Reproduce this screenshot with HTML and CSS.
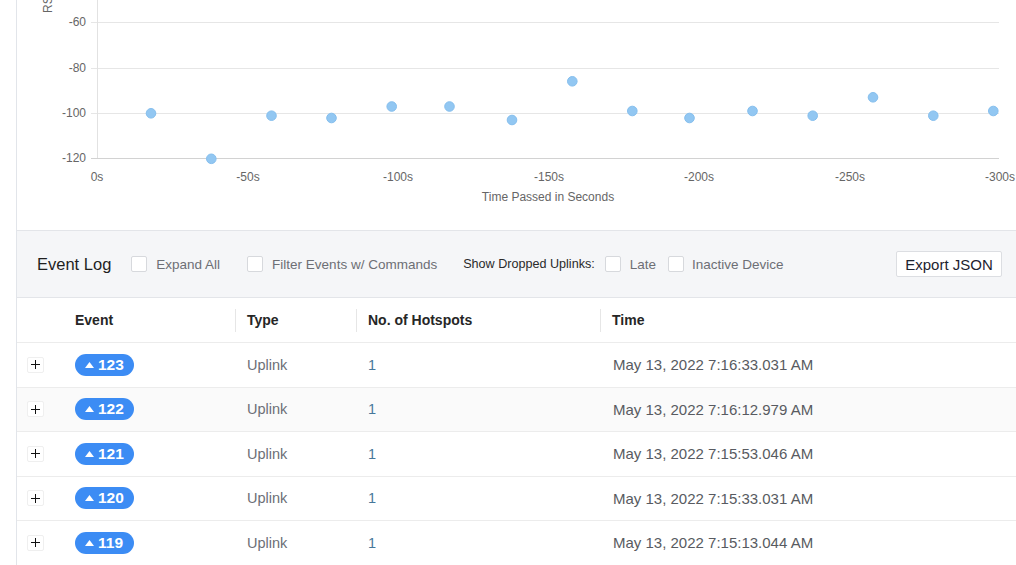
FILE: index.html
```html
<!DOCTYPE html>
<html lang="en">
<head>
<meta charset="utf-8">
<title>Event Log</title>
<link rel="stylesheet" href="styles.css">
</head>
<body>
<div class="panel">
  <section class="chart">
    <svg class="chart-svg" width="999" height="230" viewBox="0 0 999 230">
      <g transform="translate(-17 0)">
        <text class="axis-title" transform="translate(52 13) rotate(-90)">RSSI</text>
        <g class="grid">
          <line x1="91" y1="22.5" x2="999" y2="22.5"/>
          <line x1="91" y1="68.5" x2="999" y2="68.5"/>
          <line x1="91" y1="113.5" x2="999" y2="113.5"/>
        </g>
        <line class="axis" x1="91" y1="158.5" x2="999" y2="158.5"/>
        <line class="axis-v" x1="97.5" y1="0" x2="97.5" y2="158"/>
        <g class="ylab">
          <text x="86" y="26">-60</text>
          <text x="86" y="72">-80</text>
          <text x="86" y="117">-100</text>
          <text x="86" y="162">-120</text>
        </g>
        <g class="xlab">
          <text x="97" y="181">0s</text>
          <text x="248" y="181">-50s</text>
          <text x="398" y="181">-100s</text>
          <text x="549" y="181">-150s</text>
          <text x="699" y="181">-200s</text>
          <text x="850" y="181">-250s</text>
          <text x="1000" y="181">-300s</text>
        </g>
        <text class="x-title" x="548" y="201">Time Passed in Seconds</text>
        <g class="pts">
          <circle cx="151" cy="113.3" r="4.8"/>
          <circle cx="211.3" cy="158.8" r="4.8"/>
          <circle cx="271.5" cy="115.7" r="4.8"/>
          <circle cx="331.5" cy="118" r="4.8"/>
          <circle cx="391.7" cy="106.5" r="4.8"/>
          <circle cx="449.5" cy="106.5" r="4.8"/>
          <circle cx="512" cy="120" r="4.8"/>
          <circle cx="572.3" cy="81.3" r="4.8"/>
          <circle cx="632.3" cy="111" r="4.8"/>
          <circle cx="689.5" cy="118" r="4.8"/>
          <circle cx="752.5" cy="111" r="4.8"/>
          <circle cx="812.7" cy="115.7" r="4.8"/>
          <circle cx="873" cy="97.3" r="4.8"/>
          <circle cx="933.3" cy="115.7" r="4.8"/>
          <circle cx="993.3" cy="111" r="4.8"/>
        </g>
      </g>
    </svg>
  </section>

  <section class="log-bar">
    <h2 class="log-title">Event Log</h2>
    <label class="check g1"><span class="box"></span><span class="check-text">Expand All</span></label>
    <label class="check g2"><span class="box"></span><span class="check-text">Filter Events w/ Commands</span></label>
    <span class="dropped">Show Dropped Uplinks:</span>
    <label class="check g3"><span class="box"></span><span class="check-text">Late</span></label>
    <label class="check g4"><span class="box"></span><span class="check-text">Inactive Device</span></label>
    <button class="export">Export JSON</button>
  </section>

  <div class="table">
    <div class="row head">
      <div class="cell"></div>
      <div class="cell">Event</div>
      <div class="cell sep">Type</div>
      <div class="cell sep">No. of Hotspots</div>
      <div class="cell sep">Time</div>
    </div>
    <div class="row">
      <div class="cell"><span class="plus"><svg width="9" height="9" viewBox="0 0 9 9"><path d="M4.5 0 V9 M0 4.5 H9"/></svg></span></div>
      <div class="cell"><span class="badge"><svg class="tri" width="9" height="6" viewBox="0 0 9 6"><path d="M0 6 L4.5 0 L9 6 Z"/></svg>123</span></div>
      <div class="cell type">Uplink</div>
      <div class="cell count">1</div>
      <div class="cell time">May 13, 2022 7:16:33.031 AM</div>
    </div>
    <div class="row alt">
      <div class="cell"><span class="plus"><svg width="9" height="9" viewBox="0 0 9 9"><path d="M4.5 0 V9 M0 4.5 H9"/></svg></span></div>
      <div class="cell"><span class="badge"><svg class="tri" width="9" height="6" viewBox="0 0 9 6"><path d="M0 6 L4.5 0 L9 6 Z"/></svg>122</span></div>
      <div class="cell type">Uplink</div>
      <div class="cell count">1</div>
      <div class="cell time">May 13, 2022 7:16:12.979 AM</div>
    </div>
    <div class="row">
      <div class="cell"><span class="plus"><svg width="9" height="9" viewBox="0 0 9 9"><path d="M4.5 0 V9 M0 4.5 H9"/></svg></span></div>
      <div class="cell"><span class="badge"><svg class="tri" width="9" height="6" viewBox="0 0 9 6"><path d="M0 6 L4.5 0 L9 6 Z"/></svg>121</span></div>
      <div class="cell type">Uplink</div>
      <div class="cell count">1</div>
      <div class="cell time">May 13, 2022 7:15:53.046 AM</div>
    </div>
    <div class="row">
      <div class="cell"><span class="plus"><svg width="9" height="9" viewBox="0 0 9 9"><path d="M4.5 0 V9 M0 4.5 H9"/></svg></span></div>
      <div class="cell"><span class="badge"><svg class="tri" width="9" height="6" viewBox="0 0 9 6"><path d="M0 6 L4.5 0 L9 6 Z"/></svg>120</span></div>
      <div class="cell type">Uplink</div>
      <div class="cell count">1</div>
      <div class="cell time">May 13, 2022 7:15:33.031 AM</div>
    </div>
    <div class="row">
      <div class="cell"><span class="plus"><svg width="9" height="9" viewBox="0 0 9 9"><path d="M4.5 0 V9 M0 4.5 H9"/></svg></span></div>
      <div class="cell"><span class="badge"><svg class="tri" width="9" height="6" viewBox="0 0 9 6"><path d="M0 6 L4.5 0 L9 6 Z"/></svg>119</span></div>
      <div class="cell type">Uplink</div>
      <div class="cell count">1</div>
      <div class="cell time">May 13, 2022 7:15:13.044 AM</div>
    </div>
  </div>
</div>
</body>
</html>
```
FILE: styles.css
```css
* { box-sizing: border-box; }
html, body { margin: 0; padding: 0; background: #fff; }
body {
  font-family: "Liberation Sans", Arial, sans-serif;
  color: #222;
  overflow: hidden;
  height: 565px;
}
.panel {
  margin-left: 16px;
  border-left: 1px solid #e2e5ea;
  min-height: 565px;
}
.chart { height: 230px; }
.chart-svg { display: block; }
.chart-svg text { font-family: "Liberation Sans", Arial, sans-serif; font-size: 12px; fill: #666; }
.grid line { stroke: #e6e6e6; stroke-width: 1; }
.axis { stroke: #d2d2d2; stroke-width: 1; }
.axis-v { stroke: #e2e2e2; stroke-width: 1; }
.ylab text { text-anchor: end; }
.xlab text { text-anchor: middle; }
.x-title { text-anchor: middle; }
.pts circle { fill: #92c7f2; stroke: #86bfee; stroke-width: 1; }

.log-bar {
  display: flex;
  align-items: center;
  height: 68px;
  background: #f5f6f8;
  border-top: 1px solid #e3e5e9;
  border-bottom: 1px solid #e3e5e9;
  padding: 0 14px 0 20px;
}
.log-title {
  margin: 0;
  font-size: 16.5px;
  font-weight: 400;
  color: #1f1f1f;
}
.check {
  display: flex;
  align-items: center;
  gap: 9px;
  font-size: 13.5px;
  color: #6d6f75;
}
.box {
  width: 16px;
  height: 16px;
  background: #fff;
  border: 1px solid #d7d9dd;
  border-radius: 2px;
}
.g1 { margin-left: 20px; }
.g2 { margin-left: 27px; }
.g3 { margin-left: 10px; }
.g4 { margin-left: 12px; gap: 8px; }
.dropped {
  margin-left: 26px;
  font-size: 12.6px;
  color: #2a2a2a;
}
.export {
  margin-left: auto;
  height: 26px;
  width: 106px;
  padding: 0;
  background: #fff;
  border: 1px solid #dcdee2;
  border-radius: 2px;
  font-family: "Liberation Sans", Arial, sans-serif;
  font-size: 15px;
  color: #1d2330;
}

.row {
  display: grid;
  grid-template-columns: 46px 172px 121px 244px 1fr;
  height: 44.5px;
  border-bottom: 1px solid #ececec;
  align-items: center;
}
.row.head { height: 45px; }
.row.alt { background: #fafafa; }
.cell {
  padding-left: 12px;
  font-size: 14.5px;
  white-space: nowrap;
  height: 100%;
  display: flex;
  align-items: center;
}
.cell:first-child { padding-left: 10px; }
.head .cell {
  font-weight: 700;
  font-size: 14px;
  color: #262626;
  position: relative;
}
.head .sep::before {
  content: "";
  position: absolute;
  left: 0;
  top: 11px;
  bottom: 10px;
  border-left: 1px solid #e6e6e6;
}
.plus {
  width: 17px;
  height: 16px;
  border: 1px solid #efefef;
  border-radius: 2px;
  background: #fff;
  display: flex;
  align-items: center;
  justify-content: center;
}
.plus svg { display: block; }
.plus path { stroke: #111; stroke-width: 1; fill: none; }
.badge {
  display: inline-flex;
  align-items: center;
  gap: 4px;
  height: 22px;
  width: 59px;
  padding-left: 10px;
  border-radius: 11px;
  background: #3c8cf4;
  color: #fff;
  font-weight: 700;
  font-size: 15.5px;
}
.tri { fill: #fff; display: block; }
.type { color: #6c6f76; }
.count { color: #46779a; }
.time { color: #585b61; padding-left: 13px; font-size: 15px; }
```
